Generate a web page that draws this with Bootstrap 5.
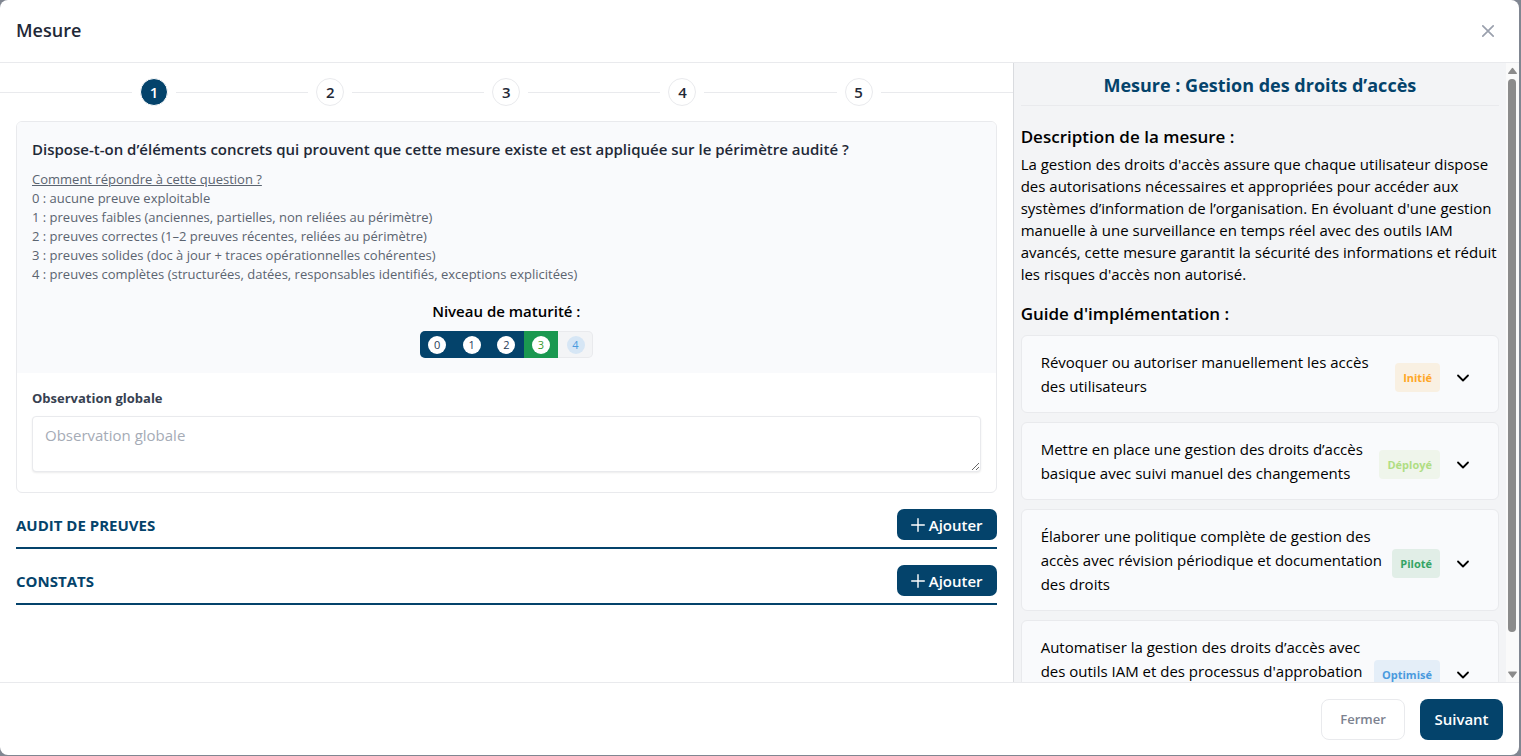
<!DOCTYPE html>
<html lang="fr">
<head>
<meta charset="utf-8">
<meta name="viewport" content="width=device-width, initial-scale=1">
<title>Mesure</title>
<link rel="stylesheet" href="https://cdn.jsdelivr.net/npm/bootstrap@5.3.0/dist/css/bootstrap.min.css">
<style>
  :root { --navy: #04436b; --line: #e9eaed; --ink: #1f2937; --soft: #f9fafc; }
  body { font-family: "Open Sans", "Noto Sans", sans-serif; font-size: 15px; line-height: 22px; color: #000; background: #808691; }
  .dialog-shell { height: 100vh; padding: 0 2px 1px 0; }
  .dialog-box { background: #fff; border-radius: 8px; }
  .dialog-head { padding: 0 24px 0 16px; height: 63px; border-bottom: 1px solid var(--line); }
  .dialog-title { font-size: 18px; line-height: 28px; font-weight: 600; color: var(--ink); margin-bottom: 2px; }
  .icon-button { padding: 0; border: 0; background: none; line-height: 0; }
  .dialog-foot { height: 73px; padding: 0 16px; gap: 15px; border-top: 1px solid var(--line); }
  .bg-navy { background: var(--navy); color: #fff; }
  .bg-navy:hover { background: #03365a; color: #fff; }

  .stepper { height: 58px; }
  .step-line { height: 1px; background: var(--line); }
  .step-dot { width: 28px; height: 28px; margin: 0 8px; border: 1px solid var(--line); border-radius: 50%; background: #fff; font-size: 15px; line-height: 22px; font-weight: 600; color: var(--ink); padding: 0; }
  .step-dot.current { background: var(--navy); border: 1px solid #fff; color: #fff; }

  .main-column { padding: 0 16px; }
  .panel { border: 1px solid var(--line); border-radius: 6px; overflow: hidden; }
  .panel-top { background: var(--soft); padding: 16px 15px 15px; }
  .question { font-size: 15px; line-height: 22px; font-weight: 600; color: var(--ink); margin-bottom: 10px; }
  .help-text { font-size: 13px; line-height: 19px; color: #5b6470; margin-bottom: 16px; }
  .rating-label { font-size: 15px; line-height: 22px; font-weight: 600; margin-bottom: 9px; }
  .rating { width: 173px; height: 27px; border-radius: 5px; overflow: hidden; background: #f3f4f6; box-shadow: inset 0 0 0 1px var(--line); }
  .rating button { padding: 0; border: 0; background: none; }
  .rating button.filled { background: var(--navy); }
  .rating button.chosen { background: #1a9850; }
  .rating span { width: 18px; height: 18px; border-radius: 50%; background: #fff; font-size: 11px; line-height: 18px; color: #1f3b57; }
  .rating .chosen span { color: #3a9a2e; }
  .rating .unset span { background: #d6e6f5; color: #4a9ade; }
  .panel-bottom { padding: 16px 15px 20px; }
  .field-label { font-size: 13px; line-height: 18px; font-weight: 700; color: #374151; margin-bottom: 9px; }
  .note-box { height: 56px; padding: 7px 12px; font-size: 15px; line-height: 22px; border: 1px solid var(--line); border-radius: 4px; box-shadow: 0 1px 2px rgba(0,0,0,.08); }
  .note-box::placeholder { color: #a5abb6; }
  .section-bar { padding-bottom: 7px; border-bottom: 2px solid var(--navy); margin-top: 16px; }
  .section-title { font-size: 15px; line-height: 22px; font-weight: 700; color: var(--navy); }
  .add-button { height: 31px; width: 100px; padding: 0; gap: 4px; border-radius: 7px; font-size: 15px; line-height: 22px; font-weight: 600; }
  .close-button { height: 41px; width: 84px; border: 1px solid var(--line); border-radius: 8px; background: #fff; color: #7c828f; font-size: 13px; font-weight: 600; padding: 0; }
  .next-button { height: 41px; width: 83px; border-radius: 8px; font-size: 15px; font-weight: 600; padding: 0; }

  .side-column { background: #f3f4f6; border-left: 1px solid #d9dbdf; padding: 0; }
  .side-scroll { padding: 8px 7px 0; overflow-y: auto; scrollbar-width: none; }
  .side-scroll::-webkit-scrollbar { display: none; }
  .side-title { font-size: 18px; line-height: 28px; font-weight: 700; color: var(--navy); padding-bottom: 6px; border-bottom: 1px solid var(--line); margin-bottom: 19px; }
  .side-heading { font-size: 17px; line-height: 24px; font-weight: 600; margin-bottom: 4px; }
  .side-text { margin-bottom: 17px; }
  .guide-list { gap: 9px; padding: 5px 0 9px; }
  .guide-item { padding: 14px 28px 14px 19px; gap: 4px; border: 1px solid var(--line); border-radius: 6px; background: var(--soft); font-size: 15px; line-height: 24px; color: #000; }
  .guide-item-tall { min-height: 102px; }
  .level { height: 29px; padding: 0 8px; border-radius: 4px; font-size: 11px; line-height: 29px; font-weight: 700; margin-top: 7px; }
  .guide-item svg { margin: 7px 0 0 12px; }
  .level-1 { color: #ffa726; background: #f9f0e2; }
  .level-2 { color: #b0de83; background: #eff5eb; }
  .level-3 { color: #35a465; background: #e1eee7; }
  .level-4 { color: #4a9ade; background: #e4eef8; }
  .scroll-track { width: 13px; background: #fafafa; padding: 4px 0 3px; gap: 2px; }
  .scroll-thumb { width: 8px; border-radius: 4px; background: #8b8b8b; flex: 553 1 0; }
  .scroll-rest { flex: 35 1 0; }
</style>
</head>
<body>
<div class="dialog-shell">
  <div class="dialog-box d-flex flex-column h-100 overflow-hidden" role="dialog" aria-labelledby="dlg-title">
    <header class="dialog-head d-flex align-items-center justify-content-between flex-shrink-0">
      <h1 class="dialog-title" id="dlg-title">Mesure</h1>
      <button class="icon-button" type="button" aria-label="Fermer la fenêtre">
        <svg width="14" height="14" viewBox="0 0 14 14" fill="none" stroke="#9aa0ad" stroke-width="1.7" stroke-linecap="round"><path d="M1.8 1.8l10.4 10.4M12.2 1.8L1.8 12.2"/></svg>
      </button>
    </header>

    <div class="row g-0 flex-grow-1 overflow-hidden">
      <main class="col-8 h-100 overflow-hidden">
        <nav class="stepper d-flex align-items-center" aria-label="Étapes">
          <span class="step-line flex-fill"></span><button type="button" class="step-dot current" aria-current="step">1</button>
          <span class="step-line flex-fill"></span><button type="button" class="step-dot">2</button>
          <span class="step-line flex-fill"></span><button type="button" class="step-dot">3</button>
          <span class="step-line flex-fill"></span><button type="button" class="step-dot">4</button>
          <span class="step-line flex-fill"></span><button type="button" class="step-dot">5</button>
          <span class="step-line flex-fill"></span>
        </nav>
        <div class="main-column">
          <section class="panel">
            <div class="panel-top">
              <h2 class="question">Dispose-t-on d’éléments concrets qui prouvent que cette mesure existe et est appliquée sur le périmètre audité ?</h2>
              <div class="help-text">
                <div><u>Comment répondre à cette question ?</u></div>
                <div>0 : aucune preuve exploitable</div>
                <div>1 : preuves faibles (anciennes, partielles, non reliées au périmètre)</div>
                <div>2 : preuves correctes (1–2 preuves récentes, reliées au périmètre)</div>
                <div>3 : preuves solides (doc à jour + traces opérationnelles cohérentes)</div>
                <div>4 : preuves complètes (structurées, datées, responsables identifiés, exceptions explicitées)</div>
              </div>
              <div class="rating-label text-center" id="rate-label">Niveau de maturité :</div>
              <div class="rating d-flex mx-auto" role="group" aria-labelledby="rate-label">
                <button type="button" class="filled flex-fill d-flex align-items-center justify-content-center"><span>0</span></button>
                <button type="button" class="filled flex-fill d-flex align-items-center justify-content-center"><span>1</span></button>
                <button type="button" class="filled flex-fill d-flex align-items-center justify-content-center"><span>2</span></button>
                <button type="button" class="chosen flex-fill d-flex align-items-center justify-content-center" aria-pressed="true"><span>3</span></button>
                <button type="button" class="unset flex-fill d-flex align-items-center justify-content-center"><span>4</span></button>
              </div>
            </div>
            <div class="panel-bottom">
              <label class="field-label d-block" for="note">Observation globale</label>
              <textarea class="note-box form-control" id="note" placeholder="Observation globale"></textarea>
            </div>
          </section>

          <section class="section-bar d-flex align-items-center justify-content-between">
            <h2 class="section-title mb-0">AUDIT DE PREUVES</h2>
            <button type="button" class="btn bg-navy add-button d-flex align-items-center justify-content-center">
              <svg width="14" height="14" viewBox="0 0 14 14" stroke="#fff" stroke-width="1.4" stroke-linecap="round"><path d="M7 .7v12.6M.7 7h12.6"/></svg>Ajouter
            </button>
          </section>
          <section class="section-bar d-flex align-items-center justify-content-between">
            <h2 class="section-title mb-0">CONSTATS</h2>
            <button type="button" class="btn bg-navy add-button d-flex align-items-center justify-content-center">
              <svg width="14" height="14" viewBox="0 0 14 14" stroke="#fff" stroke-width="1.4" stroke-linecap="round"><path d="M7 .7v12.6M.7 7h12.6"/></svg>Ajouter
            </button>
          </section>
        </div>
      </main>

      <aside class="side-column col-4 h-100 d-flex">
        <div class="side-scroll flex-grow-1 h-100">
          <h2 class="side-title text-center">Mesure : Gestion des droits d’accès</h2>
          <h3 class="side-heading">Description de la mesure :</h3>
          <p class="side-text">La gestion des droits d'accès assure que chaque utilisateur dispose des autorisations nécessaires et appropriées pour accéder aux systèmes d’information de l’organisation. En évoluant d'une gestion manuelle à une surveillance en temps réel avec des outils IAM avancés, cette mesure garantit la sécurité des informations et réduit les risques d'accès non autorisé.</p>
          <h3 class="side-heading">Guide d'implémentation :</h3>
          <div class="guide-list d-flex flex-column">
            <button type="button" class="guide-item d-flex align-items-center text-start" aria-expanded="false">
              <span class="flex-fill">Révoquer ou autoriser manuellement les accès des utilisateurs</span>
              <span class="level level-1">Initié</span>
              <svg class="flex-shrink-0" width="14" height="14" viewBox="0 0 14 14" fill="none" stroke="#000" stroke-width="1.8" stroke-linecap="round" stroke-linejoin="round"><path d="M2 4.5l5 5 5-5"/></svg>
            </button>
            <button type="button" class="guide-item d-flex align-items-center text-start" aria-expanded="false">
              <span class="flex-fill">Mettre en place une gestion des droits d’accès basique avec suivi manuel des changements</span>
              <span class="level level-2">Déployé</span>
              <svg class="flex-shrink-0" width="14" height="14" viewBox="0 0 14 14" fill="none" stroke="#000" stroke-width="1.8" stroke-linecap="round" stroke-linejoin="round"><path d="M2 4.5l5 5 5-5"/></svg>
            </button>
            <button type="button" class="guide-item d-flex align-items-center text-start" aria-expanded="false">
              <span class="flex-fill">Élaborer une politique complète de gestion des accès avec révision périodique et documentation des droits</span>
              <span class="level level-3">Piloté</span>
              <svg class="flex-shrink-0" width="14" height="14" viewBox="0 0 14 14" fill="none" stroke="#000" stroke-width="1.8" stroke-linecap="round" stroke-linejoin="round"><path d="M2 4.5l5 5 5-5"/></svg>
            </button>
            <button type="button" class="guide-item guide-item-tall d-flex align-items-center text-start" aria-expanded="false">
              <span class="flex-fill align-self-start">Automatiser la gestion des droits d’accès avec des outils IAM et des processus d'approbation</span>
              <span class="level level-4">Optimisé</span>
              <svg class="flex-shrink-0" width="14" height="14" viewBox="0 0 14 14" fill="none" stroke="#000" stroke-width="1.8" stroke-linecap="round" stroke-linejoin="round"><path d="M2 4.5l5 5 5-5"/></svg>
            </button>
          </div>
        </div>
        <div class="scroll-track h-100 flex-shrink-0 d-flex flex-column align-items-center" aria-hidden="true">
          <svg class="flex-shrink-0" width="9" height="10" viewBox="0 0 9 10" fill="#8b8b8b"><path d="M3.8 1.2q.7-1 1.4 0L8.8 6q.4 1-.6 1H.8Q-.2 7 .2 6z"/></svg>
          <span class="scroll-thumb"></span>
          <span class="scroll-rest"></span>
          <svg class="flex-shrink-0" width="9" height="8" viewBox="0 0 9 8" fill="#8b8b8b"><path d="M3.8 6.3q.7 1 1.4 0L8.8 1.5q.4-1-.6-1H.8q-1 0-.6 1z"/></svg>
        </div>
      </aside>
    </div>

    <footer class="dialog-foot d-flex align-items-center justify-content-end flex-shrink-0">
      <button type="button" class="close-button">Fermer</button>
      <button type="button" class="btn bg-navy next-button">Suivant</button>
    </footer>
  </div>
</div>
<script src="https://cdn.jsdelivr.net/npm/bootstrap@5.3.0/dist/js/bootstrap.bundle.min.js"></script>
</body>
</html>
